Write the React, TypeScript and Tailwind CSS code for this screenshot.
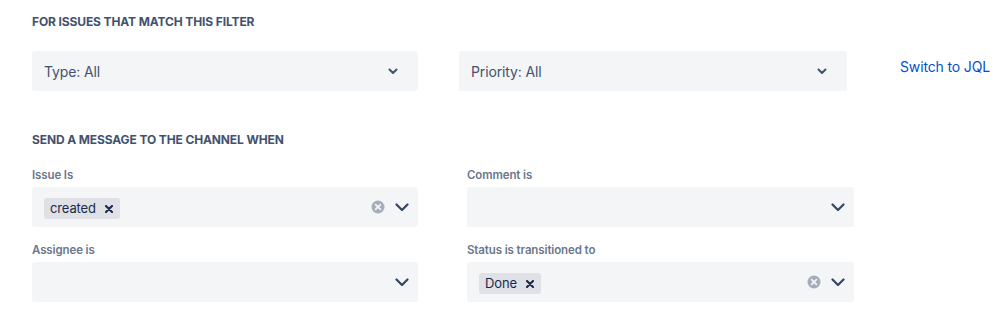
const font = { fontFamily: "Inter, 'Liberation Sans', sans-serif" };

function SmallChevron() {
  return (
    <svg width="10" height="7" viewBox="0 0 10 7" className="text-[#42526E]">
      <path d="M1.5 1.5 5 5l3.5-3.5" fill="none" stroke="currentColor" strokeWidth="2" strokeLinecap="round" strokeLinejoin="round" />
    </svg>
  );
}

function Chevron() {
  return (
    <svg width="14" height="9" viewBox="0 0 14 9" className="text-[#344563]">
      <path d="M1.5 1.5 7 7l5.5-5.5" fill="none" stroke="currentColor" strokeWidth="2.2" strokeLinecap="round" strokeLinejoin="round" />
    </svg>
  );
}

function ClearIcon() {
  return (
    <svg width="14" height="14" viewBox="0 0 14 14">
      <circle cx="7" cy="7" r="6.5" fill="#A5ADBA" />
      <path d="M4.6 4.6l4.8 4.8M9.4 4.6l-4.8 4.8" stroke="#F4F5F7" strokeWidth="1.7" strokeLinecap="round" />
    </svg>
  );
}

function TagX() {
  return (
    <svg width="8" height="8" viewBox="0 0 8 8">
      <path d="M1 1l6 6M7 1L1 7" stroke="#172B4D" strokeWidth="2.1" strokeLinecap="round" />
    </svg>
  );
}

function Tag({ label }: { label: string }) {
  return (
    <span className="inline-flex h-[21px] items-center gap-[9px] rounded-[3px] bg-[#DFE1E6] pl-[6px] pr-[7px] text-[13px] tracking-[-0.01em] text-[#172B4D]">
      {label}
      <TagX />
    </span>
  );
}

function Field({ label, tag }: { label: string; tag?: string }) {
  return (
    <div>
      <div className="h-[22px] text-[11.5px] font-semibold leading-[20px] tracking-[-0.01em] text-[#6B778C]">{label}</div>
      <div className="flex h-[40px] items-center rounded-[3px] bg-[#F4F5F7] pl-[12px] pr-[9px]">
        <div className="flex-1">{tag && <Tag label={tag} />}</div>
        {tag && (
          <span className="mr-[10px] flex">
            <ClearIcon />
          </span>
        )}
        <Chevron />
      </div>
    </div>
  );
}

export default function App() {
  return (
    <div className="h-[316px] w-[999px] bg-white pl-[32px] pt-[14px]" style={font}>
      <h2 className="text-[12px] font-bold uppercase leading-[16px] tracking-[-0.01em] text-[#42526E]">
        For issues that match this filter
      </h2>
      <div className="mt-[21px] flex items-start">
        <div className="flex h-[40px] w-[386px] items-center justify-between rounded-[3px] bg-[#F4F5F7] pl-[12px] pr-[20px] text-[14px] tracking-[-0.01em] text-[#42526E]">
          Type: All
          <SmallChevron />
        </div>
        <div className="ml-[41px] flex h-[40px] w-[388px] items-center justify-between rounded-[3px] bg-[#F4F5F7] pl-[12px] pr-[20px] text-[14px] tracking-[-0.01em] text-[#42526E]">
          Priority: All
          <SmallChevron />
        </div>
        <a className="ml-[53px] mt-[6px] text-[14px] leading-[20px] tracking-[-0.01em] text-[#0052CC]">Switch to JQL</a>
      </div>
      <h2 className="mt-[41px] text-[12px] font-bold uppercase leading-[16px] tracking-[-0.01em] text-[#42526E]">
        Send a message to the channel when
      </h2>
      <div className="mt-[17px] grid grid-cols-[386px_387px] gap-x-[49px] gap-y-[13px]">
        <Field label="Issue Is" tag="created" />
        <Field label="Comment is" />
        <Field label="Assignee is" />
        <Field label="Status is transitioned to" tag="Done" />
      </div>
    </div>
  );
}
